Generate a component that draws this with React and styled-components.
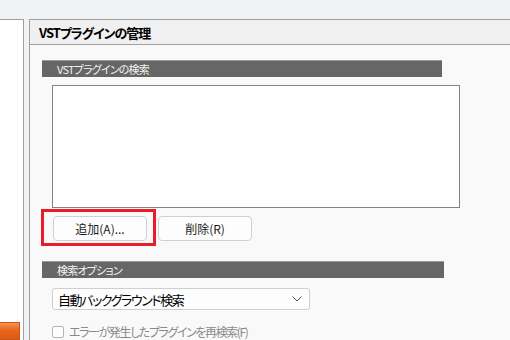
import React from 'react';
import styled, { createGlobalStyle } from 'styled-components';

const GlobalStyle = createGlobalStyle`
	html, body {
		margin: 0;
		padding: 0;
		background: #f1f2f4;
	}
	body {
		font-family: 'Noto Sans CJK JP', 'Noto Sans', sans-serif;
		font-feature-settings: 'palt';
	}
`;

const Frame = styled.div`
	display: flex;
	flex-direction: column;
	width: 510px;
	height: 340px;
	overflow: hidden;
	background: #f1f2f4;
`;

const TopStrip = styled.div`
	height: 19px;
	flex-shrink: 0;
`;

const Body = styled.div`
	display: flex;
	flex: 1;
	gap: 5px;
	min-height: 0;
`;

const LeftPane = styled.div`
	width: 24px;
	box-sizing: border-box;
	flex-shrink: 0;
	background: #ffffff;
	border-top: 1px solid #a0a0a0;
	border-right: 1px solid #a0a0a0;
	display: flex;
	flex-direction: column;
`;

const OrangeTab = styled.div`
	margin-top: 302px;
	width: 20px;
	height: 24px;
	box-sizing: border-box;
	background: linear-gradient(#f59252, #e8661f 45%, #e05a10);
	border: 1px solid #c9561a;
	border-left: none;
`;

const MainPane = styled.div`
	flex: 1;
	display: flex;
	flex-direction: column;
	background: #f9f9f9;
	border-top: 1px solid #a0a0a0;
	border-left: 1px solid #a0a0a0;
`;

const PaneHeader = styled.div`
	height: 24px;
	flex-shrink: 0;
	display: flex;
	align-items: center;
	padding-left: 9px;
	background: #f0f0f0;
	border-bottom: 1px solid #a0a0a0;
	font-size: 13px;
	font-weight: bold;
	letter-spacing: -1px;
	color: #000;
`;

const Content = styled.div`
	display: flex;
	flex-direction: column;
	align-items: flex-start;
	padding: 15px 0 0 12px;
`;

const SectionBar = styled.div`
	width: ${(p) => p.width}px;
	height: 17px;
	box-sizing: border-box;
	margin-top: ${(p) => p.top || 0}px;
	background: #666666;
	border-top: 1px solid #999999;
	display: flex;
	align-items: center;
	padding-left: 15px;
	font-size: 11px;
	letter-spacing: -0.8px;
	color: #f4f4f4;
	line-height: 1;
`;

const ListBox = styled.div`
	width: 408px;
	height: 123px;
	box-sizing: border-box;
	margin: 8px 0 0 10px;
	background: #ffffff;
	border: 1px solid #82838a;
`;

const ButtonRow = styled.div`
	display: flex;
	gap: 11px;
	margin: 7px 0 0 11px;
`;

const ButtonWrap = styled.div`
	position: relative;
`;

const Button = styled.button`
	width: 94px;
	height: 25px;
	box-sizing: border-box;
	padding: 0;
	background: #fdfdfd;
	border: 1px solid #d0d0d0;
	border-radius: 4px;
	font-family: inherit;
	font-feature-settings: 'palt';
	font-size: 12px;
	color: #1a1a1a;
`;

const Highlight = styled.div`
	position: absolute;
	left: -12px;
	right: -9px;
	top: -6px;
	bottom: -5px;
	border: 3px solid #ea1c2a;
	pointer-events: none;
`;

const Select = styled.div`
	width: 258px;
	height: 22px;
	box-sizing: border-box;
	margin: 10px 0 0 10px;
	padding: 0 7px 0 5px;
	display: flex;
	align-items: center;
	justify-content: space-between;
	background: #fdfdfd;
	border: 1px solid #cfcfcf;
	border-radius: 3px;
	font-size: 13px;
	color: #000;
`;

const SelectText = styled.span`
	letter-spacing: -1.4px;
`;

const CheckRow = styled.label`
	display: flex;
	align-items: center;
	gap: 5px;
	margin: 13px 0 0 10px;
	font-size: 12px;
	letter-spacing: -1.4px;
	color: #8a8a8a;
`;

const CheckBox = styled.span`
	width: 12px;
	height: 12px;
	box-sizing: border-box;
	border: 1px solid #b4b4b4;
	border-radius: 2px;
	background: #fcfcfc;
`;

const Chevron = () => (
	<svg width="10" height="6" viewBox="0 0 10 6">
		<path d="M0.5 0.5 L5 5 L9.5 0.5" fill="none" stroke="#555" strokeWidth="1" />
	</svg>
);

export default function App() {
	return (
		<>
			<GlobalStyle />
			<Frame>
				<TopStrip />
				<Body>
					<LeftPane>
						<OrangeTab />
					</LeftPane>
					<MainPane>
						<PaneHeader>VSTプラグインの管理</PaneHeader>
						<Content>
							<SectionBar width={400}>VSTプラグインの検索</SectionBar>
							<ListBox />
							<ButtonRow>
								<ButtonWrap>
									<Button>追加(A)...</Button>
									<Highlight />
								</ButtonWrap>
								<ButtonWrap>
									<Button>削除(R)</Button>
								</ButtonWrap>
							</ButtonRow>
							<SectionBar width={402} top={20}>検索オプション</SectionBar>
							<Select>
								<SelectText>自動バックグラウンド検索</SelectText>
								<Chevron />
							</Select>
							<CheckRow>
								<CheckBox />
								エラーが発生したプラグインを再検索(F)
							</CheckRow>
						</Content>
					</MainPane>
				</Body>
			</Frame>
		</>
	);
}
